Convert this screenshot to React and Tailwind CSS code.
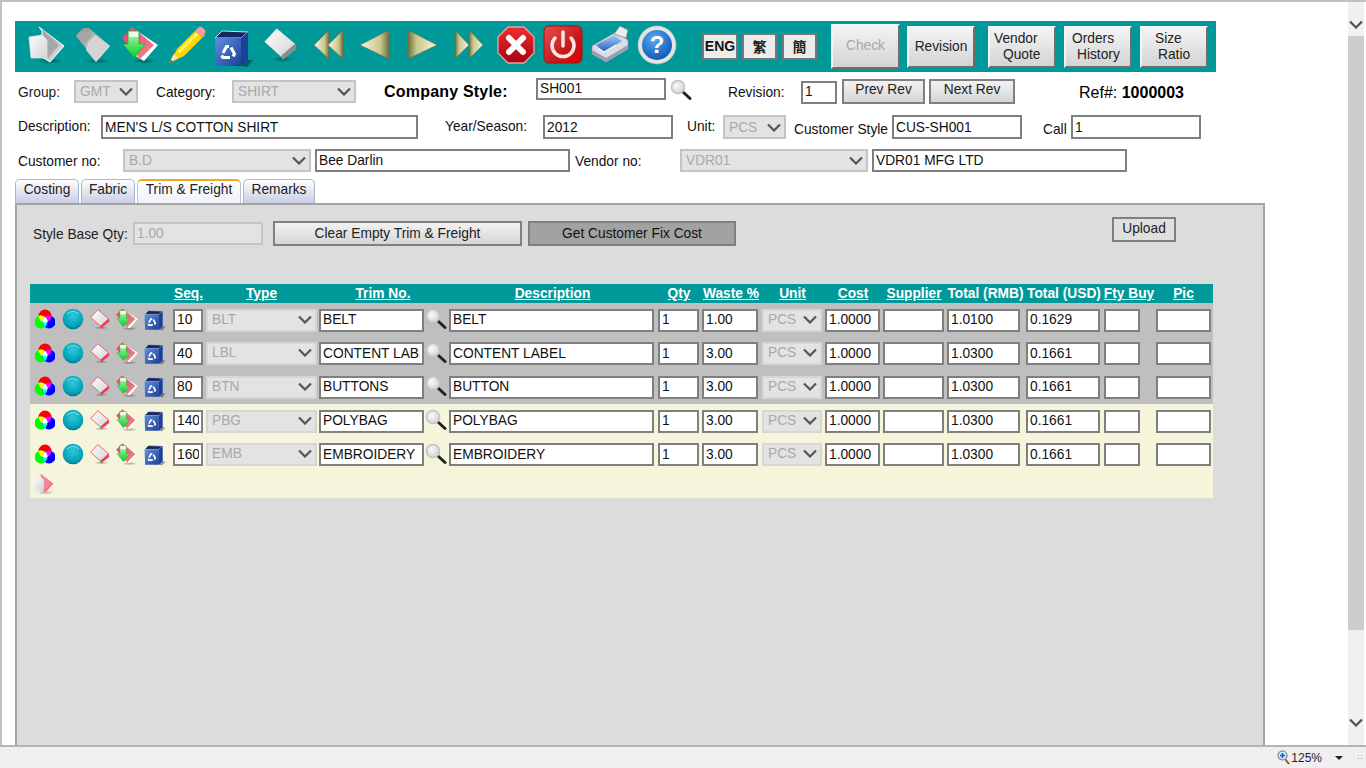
import React from "react";

const Defs = () => (
  <svg className="absolute w-0 h-0" aria-hidden="true">
    <defs>
      <linearGradient id="sheet" x1="0" y1="0" x2="1" y2="1">
        <stop offset="0" stopColor="#ffffff" />
        <stop offset="1" stopColor="#d2d2d2" />
      </linearGradient>
      <linearGradient id="greyFold" x1="0" y1="0" x2="1" y2="1">
        <stop offset="0" stopColor="#8f8f8f" />
        <stop offset="0.55" stopColor="#c0c0c0" />
        <stop offset="1" stopColor="#f4f4f4" />
      </linearGradient>
      <linearGradient id="pinkFold" x1="0" y1="0" x2="1" y2="1">
        <stop offset="0" stopColor="#e8405c" />
        <stop offset="1" stopColor="#f08a9a" />
      </linearGradient>
      <linearGradient id="green" x1="0" y1="0" x2="0" y2="1">
        <stop offset="0" stopColor="#b8f8b8" />
        <stop offset="1" stopColor="#00d020" />
      </linearGradient>
      <linearGradient id="olive" x1="0" y1="0" x2="1" y2="0">
        <stop offset="0" stopColor="#f5f5dc" />
        <stop offset="0.7" stopColor="#c8c890" />
        <stop offset="1" stopColor="#6f6f3c" />
      </linearGradient>
      <linearGradient id="oliveR" x1="0" y1="0" x2="1" y2="0">
        <stop offset="0" stopColor="#6f6f3c" />
        <stop offset="0.3" stopColor="#c8c890" />
        <stop offset="1" stopColor="#f5f5dc" />
      </linearGradient>
      <linearGradient id="blueBin" x1="0" y1="0" x2="1" y2="1">
        <stop offset="0" stopColor="#5f8fe0" />
        <stop offset="1" stopColor="#1c3f98" />
      </linearGradient>
      <linearGradient id="redStop" x1="0" y1="0" x2="0" y2="1">
        <stop offset="0" stopColor="#f03030" />
        <stop offset="1" stopColor="#a80010" />
      </linearGradient>
      <linearGradient id="redPower" x1="0" y1="0" x2="1" y2="1">
        <stop offset="0" stopColor="#e85050" />
        <stop offset="0.6" stopColor="#c81818" />
        <stop offset="1" stopColor="#e00000" />
      </linearGradient>
      <linearGradient id="btnFace" x1="0" y1="0" x2="0" y2="1">
        <stop offset="0" stopColor="#a8ccf4" />
        <stop offset="1" stopColor="#2060c0" />
      </linearGradient>
      <radialGradient id="helpBlue" cx="0.4" cy="0.3" r="0.8">
        <stop offset="0" stopColor="#58a8f0" />
        <stop offset="1" stopColor="#0a4fb0" />
      </radialGradient>
      <radialGradient id="teal" cx="0.5" cy="0.35" r="0.65">
        <stop offset="0" stopColor="#30c8d8" />
        <stop offset="0.8" stopColor="#00a0b8" />
        <stop offset="1" stopColor="#00707f" />
      </radialGradient>
      <radialGradient id="shade">
        <stop offset="0" stopColor="#000" stopOpacity="0.35" />
        <stop offset="1" stopColor="#000" stopOpacity="0" />
      </radialGradient>
      <radialGradient id="lens" cx="0.4" cy="0.4" r="0.7">
        <stop offset="0" stopColor="#fafafa" />
        <stop offset="1" stopColor="#cfcfcf" />
      </radialGradient>
      <clipPath id="cR"><circle cx="10" cy="7" r="6.5" /></clipPath>
      <clipPath id="cG"><circle cx="6" cy="13" r="6.5" /></clipPath>
      <clipPath id="cB"><circle cx="14" cy="13" r="6.5" /></clipPath>
    </defs>
  </svg>
);

const Box = ({ size = 40, children }) => (
  <svg width={size} height={size} viewBox="0 0 40 40">{children}</svg>
);

const NewDoc = ({ size, pink }) => (
  <Box size={size}>
    <ellipse cx="24" cy="36" rx="14" ry="3" fill="url(#shade)" />
    <path d="M13 2 L38 21 L24 37 L16 32 L16 6 Z" fill={pink ? "url(#pinkFold)" : "url(#greyFold)"} stroke="#fff" strokeWidth="1" />
    <path d="M17 5 L33 20 L22 33 L17 29 Z" fill={pink ? "#f08a9a" : "#a8a8a8"} />
    <path d="M3 12 L16 10 L21 15 L21 33 L5 33 Z" fill="url(#sheet)" stroke="#eee" strokeWidth="0.6" />
  </Box>
);

const Folder = () => (
  <Box>
    <ellipse cx="24" cy="36" rx="14" ry="3" fill="url(#shade)" />
    <path d="M3 10 L10 3 L16 3 L37 21 L23 37 Z" fill="url(#greyFold)" />
    <path d="M12 5 L18 10 L10 20 L3 11 Z" fill="#a6a6a6" />
    <path d="M15 17 L22 10 L37 21 L23 37 L13 25 Z" fill="#d4d4d4" />
  </Box>
);

const SaveIcon = ({ size }) => (
  <Box size={size}>
    <ellipse cx="24" cy="36" rx="13" ry="3" fill="url(#shade)" />
    <path d="M11 2 L38 20 L24 36 L14 30 Z" fill="#fff" />
    <path d="M2 13 L12 2 L34 20 L20 34 Z" fill="url(#pinkFold)" />
    <path d="M8 6 H19 V19 H25 L14 33 L3 19 H8 Z" fill="url(#green)" stroke="#0a9a18" strokeWidth="0.5" />
    <rect x="9" y="7" width="9" height="5" fill="#ecffec" />
  </Box>
);

const Pencil = () => (
  <Box>
    <path d="M2 38 L10 24 L31 3 L38 10 L17 31 Z" fill="#ffd800" stroke="#c89a00" strokeWidth="0.6" />
    <path d="M12 27 L33 6" stroke="#fff27a" strokeWidth="2.5" />
    <path d="M2 38 L7 29 L11 33 Z" fill="#f6e6b8" />
    <path d="M2 38 L4 34.5 L5.5 36.5 Z" fill="#555" />
    <path d="M28 6 L32 2 Q34 1 36 3 L38 5 Q39 7 38 8 L35 12 Z" fill="#f0a0a0" stroke="#c87878" strokeWidth="0.5" />
  </Box>
);

const Recycle = () => (
  <g transform="translate(14 22)" fill="none" stroke="#fff" strokeWidth="3">
    <path d="M-5 1 L-1.5 -5.5 L1 -5.5" />
    <path d="M3 -4.5 L6.5 2 L5 4.5" />
    <path d="M2 5.5 L-5 5.5 L-6.5 3.5" />
  </g>
);

const Bin = ({ size }) => (
  <Box size={size}>
    <path d="M27 36 L34 30 L39 30 L33 37 Z" fill="#000" opacity="0.4" />
    <path d="M1 8 L8 1 L34 2 L27 8 Z" fill="#16265e" stroke="#e4ecff" strokeWidth="0.9" />
    <path d="M27 8 L34 2 L34 30 L27 36 Z" fill="#1c3f98" />
    <path d="M1 8 H27 V36 H2 Z" fill="url(#blueBin)" />
    <Recycle />
  </Box>
);

const Eraser = ({ size, pink }) => (
  <Box size={size}>
    <ellipse cx="22" cy="36" rx="13" ry="3" fill="url(#shade)" />
    <path d="M3 17 L16 3 L36 20 L22 34 Z" fill="url(#sheet)" stroke={pink ? "#f0506a" : "#f4f4f4"} strokeWidth={pink ? 1.6 : 0.6} />
    <path d="M36 19 L37 25 L22 37 L21 32 Z" fill={pink ? "#ee3c5a" : "#8c8c8c"} />
  </Box>
);

const Tri = ({ dir, dbl }) => {
  const fill = dir === "l" ? "url(#olive)" : "url(#oliveR)";
  const stroke = "#6a6a44";
  if (dir === "l") {
    return (
      <Box>
        {dbl ? (
          <>
            <path d="M6 20 L21 5 V34 Z" fill={fill} stroke={stroke} strokeWidth="0.6" />
            <path d="M20 20 L35 5 V34 Z" fill={fill} stroke={stroke} strokeWidth="0.6" />
          </>
        ) : (
          <path d="M5 20 L34 5 V34 Z" fill={fill} stroke={stroke} strokeWidth="0.6" />
        )}
      </Box>
    );
  }
  return (
    <Box>
      {dbl ? (
        <>
          <path d="M6 5 L20 20 L6 34 Z" fill={fill} stroke={stroke} strokeWidth="0.6" />
          <path d="M20 5 L34 20 L20 34 Z" fill={fill} stroke={stroke} strokeWidth="0.6" />
        </>
      ) : (
        <path d="M6 5 L35 20 L6 34 Z" fill={fill} stroke={stroke} strokeWidth="0.6" />
      )}
    </Box>
  );
};

const Stop = () => (
  <Box>
    <path d="M12 2 H28 L38 12 V28 L28 38 H12 L2 28 V12 Z" fill="url(#redStop)" stroke="#e8a0a0" strokeWidth="1.4" />
    <path d="M13 13 L27 27 M27 13 L13 27" stroke="#fff" strokeWidth="6" strokeLinecap="round" />
  </Box>
);

const Power = () => (
  <Box>
    <rect x="1" y="1" width="38" height="37" rx="5" fill="url(#redPower)" stroke="#a01010" strokeWidth="1" />
    <path d="M12 13 A11 11 0 1 0 28 13" fill="none" stroke="#fde8e8" strokeWidth="3.5" strokeLinecap="round" />
    <path d="M20 7 V21" stroke="#fde8e8" strokeWidth="3.5" strokeLinecap="round" />
  </Box>
);

const Printer = () => (
  <Box>
    <path d="M2 21 L26 7 L38 15 L38 24 L16 37 L2 29 Z" fill="#d8dce6" stroke="#8a8e98" strokeWidth="0.6" />
    <path d="M6 20 L24 10 L32 16 L14 27 Z" fill="url(#btnFace)" />
    <path d="M24 9 L30 1 L38 5 L36 13 Z" fill="#ececec" stroke="#8a8a8a" strokeWidth="0.8" />
    <path d="M2 25 L16 33 L38 20 V24 L16 37 L2 29 Z" fill="#9aa0b0" />
    <path d="M8 24 L14 27 L26 20" fill="none" stroke="#f4f4f4" strokeWidth="1.4" />
  </Box>
);

const Help = () => (
  <Box>
    <circle cx="20" cy="20" r="19" fill="#e4e4e4" stroke="#c0c0c0" strokeWidth="0.6" />
    <circle cx="20" cy="20" r="15" fill="url(#helpBlue)" />
    <text x="20" y="28" textAnchor="middle" fontSize="24" fontWeight="700" fill="#fff" fontFamily="Liberation Sans, sans-serif">?</text>
  </Box>
);

const Rgb = () => (
  <svg width="20" height="20" viewBox="0 0 20 20">
    <circle cx="10" cy="7" r="6.5" fill="#ff0000" />
    <circle cx="6" cy="13" r="6.5" fill="#00ff00" />
    <circle cx="14" cy="13" r="6.5" fill="#0000ff" />
    <g clipPath="url(#cR)">
      <circle cx="6" cy="13" r="6.5" fill="#ffff00" />
      <circle cx="14" cy="13" r="6.5" fill="#ff00ff" />
    </g>
    <g clipPath="url(#cG)">
      <circle cx="14" cy="13" r="6.5" fill="#00ffff" />
      <g clipPath="url(#cR)"><circle cx="14" cy="13" r="6.5" fill="#ffffff" /></g>
    </g>
  </svg>
);

const Teal = () => (
  <svg width="22" height="22" viewBox="0 0 22 22">
    <circle cx="11" cy="11" r="10.3" fill="url(#teal)" />
    <path d="M5 6 Q11 1 17 6" fill="none" stroke="#8fe8f0" strokeWidth="1" opacity="0.8" />
  </svg>
);

const Mag = ({ size = 22 }) => (
  <svg width={size} height={size} viewBox="0 0 22 22">
    <path d="M13 13 L20 19.5" stroke="#222" strokeWidth="3" strokeLinecap="round" />
    <circle cx="8" cy="8" r="6.5" fill="url(#lens)" stroke="#c4c4c4" strokeWidth="1.6" />
  </svg>
);

const Chevron = ({ w = 14, h = 9, color = "#555" }) => (
  <svg width={w} height={h} viewBox="0 0 14 9">
    <path d="M1 1.5 L7 7.5 L13 1.5" fill="none" stroke={color} strokeWidth="2.2" />
  </svg>
);

const Field = ({ value = "", className = "" }) => (
  <input
    readOnly
    value={value}
    className={`shrink-0 bg-white border-2 border-[#7f7f7f] px-[2px] text-[13.75px] text-[#111] outline-none font-['Liberation_Sans',sans-serif] ${className}`}
  />
);

const Pick = ({ value, className = "" }) => (
  <div className={`shrink-0 flex items-center justify-between bg-[#e3e3e3] border-2 border-[#c4c4c4] pl-[4px] pr-[3px] text-[13.75px] text-[#a9a9a9] ${className}`}>
    <span className="mt-[2px]">{value}</span>
    <Chevron />
  </div>
);

const Label = ({ children, className = "" }) => (
  <span className={`shrink-0 text-[13.75px] text-[#111] whitespace-nowrap ${className}`}>{children}</span>
);

const FormBtn = ({ children, className = "" }) => (
  <div className={`shrink-0 flex items-center justify-center border-2 border-[#808080] bg-gradient-to-b from-[#f2f2f2] to-[#d6d6d6] text-[13.75px] text-[#222] ${className}`}>
    {children}
  </div>
);

const ToolBtn = ({ className = "", children }) => (
  <div className={`shrink-0 h-[42px] w-[68px] border-2 border-t-[#f4f4f4] border-l-[#f4f4f4] border-r-[#6e6e6e] border-b-[#6e6e6e] bg-gradient-to-b from-[#f4f4f4] to-[#d4d4d4] text-[13.75px] leading-[16px] text-[#222] flex flex-col justify-center ${className}`}>
    {children}
  </div>
);

const toolIcons = [
  <NewDoc key="a" />, <Folder key="b" />, <SaveIcon key="c" />, <Pencil key="d" />,
  <span key="e" className="flex mt-[10px]"><Bin /></span>,
  <span key="f" className="flex -mt-[2px]"><Eraser size={37} /></span>,
  <Tri key="g" dir="l" dbl />, <Tri key="h" dir="l" />, <Tri key="i" dir="r" />, <Tri key="j" dir="r" dbl />,
  <Stop key="k" />, <Power key="l" />, <Printer key="m" />, <Help key="n" />,
];

const colTpl = "grid grid-cols-[143px_33px_113px_130px_209px_44px_60px_63px_58px_64px_79px_78px_52px_57px]";

const headers = [
  ["Seq.", 1], ["Type", 1], ["Trim No.", 1], ["Description", 1], ["Qty", 1], ["Waste %", 1], ["Unit", 1],
  ["Cost", 1], ["Supplier", 1], ["Total (RMB)", 0], ["Total (USD)", 0], ["Fty Buy", 1], ["Pic", 1],
];

const rows = [
  { seq: "10", type: "BLT", trim: "BELT", desc: "BELT", waste: "1.00", rmb: "1.0100", usd: "0.1629", h: "h-[34px]", bg: "bg-[#bfbfbf]", cell: "h-[23px] pb-[2px]" },
  { seq: "40", type: "LBL", trim: "CONTENT LABEL", desc: "CONTENT LABEL", waste: "3.00", rmb: "1.0300", usd: "0.1661", h: "h-[33px]", bg: "bg-[#bfbfbf]", cell: "h-[23px] pb-[1px]" },
  { seq: "80", type: "BTN", trim: "BUTTONS", desc: "BUTTON", waste: "3.00", rmb: "1.0300", usd: "0.1661", h: "h-[34px]", bg: "bg-[#bfbfbf]", cell: "h-[23px] pb-[1px]" },
  { seq: "140", type: "PBG", trim: "POLYBAG", desc: "POLYBAG", waste: "3.00", rmb: "1.0300", usd: "0.1661", h: "h-[34px]", bg: "bg-[#f5f5dc]", cell: "h-[23px] pb-[2px]" },
  { seq: "160", type: "EMB", trim: "EMBROIDERY", desc: "EMBROIDERY", waste: "3.00", rmb: "1.0300", usd: "0.1661", h: "h-[33px]", bg: "bg-[#f5f5dc]", cell: "h-[23px] pb-[1px]" },
];

const Row = ({ r }) => (
  <div className={`${colTpl} items-center ${r.h} ${r.bg}`}>
    <div className="flex items-center pl-[5px] h-[26px] -mt-[2px]">
      <span className="w-[20px] flex"><Rgb /></span>
      <span className="w-[22px] ml-[7px] flex"><Teal /></span>
      <span className="w-[22px] ml-[5px] flex"><Eraser size={22} pink /></span>
      <span className="w-[24px] ml-[4px] flex"><SaveIcon size={24} /></span>
      <span className="w-[22px] ml-[5px] flex mt-[4px]"><Bin size={22} /></span>
    </div>
    <Field value={r.seq} className={`${r.cell} w-[30px]`} />
    <Pick value={r.type} className="h-[23px] pb-[2px] w-[111px] border-[#d6d6d6]" />
    <div className="flex items-center">
      <Field value={r.trim} className={`${r.cell} w-[105px]`} />
      <span className="ml-[1px] flex -mt-[2px]"><Mag /></span>
    </div>
    <Field value={r.desc} className={`${r.cell} w-[205px]`} />
    <Field value="1" className={`${r.cell} w-[41px]`} />
    <Field value={r.waste} className={`${r.cell} w-[56px]`} />
    <Pick value="PCS" className="h-[23px] pb-[2px] w-[60px] border-[#d6d6d6]" />
    <Field value="1.0000" className={`${r.cell} w-[55px]`} />
    <Field className={`${r.cell} w-[61px]`} />
    <Field value={r.rmb} className={`${r.cell} w-[73px]`} />
    <Field value={r.usd} className={`${r.cell} w-[74px]`} />
    <Field className={`${r.cell} w-[36px]`} />
    <Field className={`${r.cell} w-[55px]`} />
  </div>
);

const tabs = [
  ["Costing", "w-[64px]", false],
  ["Fabric", "w-[54px]", false],
  ["Trim & Freight", "w-[104px]", true],
  ["Remarks", "w-[72px]", false],
];

export default function App() {
  return (
    <div className="w-[1366px] h-[768px] overflow-hidden flex flex-col bg-white font-['Liberation_Sans',Arial,sans-serif]">
      <Defs />
      <div className="flex-1 min-h-0 flex border-t-2 border-l-2 border-[#c0c0c0]">
        <div className="flex-1 min-w-0 flex flex-col pl-[13px] pt-[19px]">
          {/* top toolbar */}
          <div className="w-[1201px] h-[51px] shrink-0 bg-[#009999] flex items-center pl-[7px]">
            {toolIcons.map((ic, i) => (
              <span key={i} className="w-[47px] shrink-0 flex justify-center -mt-[3px]">{ic}</span>
            ))}
            <div className="ml-[22px] w-[36px] h-[27px] -mt-[1px] shrink-0 flex items-center justify-center border-2 border-[#777] bg-[#ececec] text-[14px] font-bold text-[#111]">ENG</div>
            <div className="ml-[4px] w-[35px] h-[27px] -mt-[1px] shrink-0 flex items-center justify-center border-2 border-[#777] bg-[#ececec] text-[14px] font-bold text-[#222] font-['Noto_Sans_CJK_TC',sans-serif]">繁</div>
            <div className="ml-[5px] w-[35px] h-[27px] -mt-[1px] shrink-0 flex items-center justify-center border-2 border-[#777] bg-[#ececec] text-[14px] font-bold text-[#222] font-['Noto_Sans_CJK_TC',sans-serif]">簡</div>
            <ToolBtn className="ml-[14px] w-[69px] !h-[45px] items-center text-[#a8a8a8] border-[#dcdcdc] pb-[2px]">Check</ToolBtn>
            <ToolBtn className="ml-[7px] items-center mt-[1px]">Revision</ToolBtn>
            <ToolBtn className="ml-[13px] pl-[4px] mt-[1px]"><span>Vendor</span><span className="pl-[9px]">Quote</span></ToolBtn>
            <ToolBtn className="ml-[8px] pl-[6px] mt-[1px]"><span>Orders</span><span className="pl-[5px]">History</span></ToolBtn>
            <ToolBtn className="ml-[8px] pl-[13px] mt-[1px]"><span>Size</span><span className="pl-[3px]">Ratio</span></ToolBtn>
          </div>

          {/* style header */}
          <div className="mt-[6px] h-[26px] shrink-0 flex items-center pl-[3px]">
            <Label className="w-[56px] text-[#222] mt-[4px]">Group:</Label>
            <Pick value="GMT" className="w-[64px] h-[23px] mt-[1px]" />
            <Label className="ml-[18px] w-[76px] mt-[4px]">Category:</Label>
            <Pick value="SHIRT" className="w-[124px] h-[23px] mt-[1px]" />
            <span className="ml-[28px] w-[152px] shrink-0 text-[16px] font-bold text-black tracking-[0.2px] mt-[2px]">Company Style:</span>
            <Field value="SH001" className="w-[130px] h-[22px] pb-[2px] self-start" />
            <span className="ml-[4px] w-[22px] shrink-0 flex -mt-[3px]"><Mag /></span>
            <Label className="ml-[36px] w-[73px] mt-[4px]">Revision:</Label>
            <Field value="1" className="w-[36px] h-[23px] mt-[2px] pb-[1px]" />
            <FormBtn className="ml-[5px] w-[83px] h-[25px] pb-[2px]">Prev Rev</FormBtn>
            <FormBtn className="ml-[4px] w-[86px] h-[25px] pb-[2px]">Next Rev</FormBtn>
            <span className="ml-[64px] shrink-0 text-[16px] text-black mt-[4px]">Ref#: <b>1000003</b></span>
          </div>

          <div className="mt-[11px] h-[24px] shrink-0 flex items-center pl-[3px]">
            <Label className="w-[83px]">Description:</Label>
            <Field value="MEN'S L/S COTTON SHIRT" className="w-[317px] h-[24px]" />
            <Label className="ml-[27px] w-[98px]">Year/Season:</Label>
            <Field value="2012" className="w-[130px] h-[24px]" />
            <Label className="ml-[14px] w-[36px]">Unit:</Label>
            <Pick value="PCS" className="w-[63px] h-[24px]" />
            <Label className="ml-[8px] w-[98px] mt-[6px]">Customer Style</Label>
            <Field value="CUS-SH001" className="w-[130px] h-[24px]" />
            <Label className="ml-[21px] w-[28px] mt-[6px]">Call</Label>
            <Field value="1" className="w-[130px] h-[24px]" />
          </div>

          <div className="mt-[10px] h-[23px] shrink-0 flex items-center pl-[3px]">
            <Label className="w-[105px] mt-[4px]">Customer no:</Label>
            <Pick value="B.D" className="w-[188px] h-[23px]" />
            <Field value="Bee Darlin" className="ml-[4px] w-[255px] h-[23px] pb-[1px]" />
            <Label className="ml-[5px] w-[105px] mt-[4px]">Vendor no:</Label>
            <Pick value="VDR01" className="w-[188px] h-[23px]" />
            <Field value="VDR01 MFG LTD" className="ml-[4px] w-[255px] h-[23px] pb-[1px]" />
          </div>

          {/* tabs */}
          <div className="mt-[7px] h-[24px] shrink-0 flex gap-[2px]">
            {tabs.map(([t, w, active]) => (
              <div
                key={t}
                className={`${w} flex items-start justify-center rounded-t-[5px] border border-b-0 text-[13.75px] text-[#222] bg-gradient-to-b ${active ? "leading-[18px] border-[#b8c4d4] border-t-2 border-t-[#f5a623] from-white to-[#f0f2f8]" : "leading-[20px] border-[#a9b8cc] from-white to-[#c9cde4]"}`}
              >
                {t}
              </div>
            ))}
          </div>

          {/* panel */}
          <div className="flex-1 min-h-0 w-[1250px] bg-[#dcdcdc] border-2 border-b-0 border-[#a4a4a4] overflow-hidden">
            <div className="flex items-start pt-[12px]">
              <div className="flex items-center mt-[4px] pl-[16px]">
                <Label className="w-[100px] text-[#222] mt-[4px]">Style Base Qty:</Label>
                <Field value="1.00" className="w-[130px] h-[23px] !bg-[#e3e3e3] !border-[#c4c4c4] !text-[#a9a9a9]" />
                <FormBtn className="ml-[10px] w-[249px] h-[25px] pt-[2px]">Clear Empty Trim &amp; Freight</FormBtn>
                <div className="ml-[6px] w-[208px] h-[25px] pt-[2px] flex items-center justify-center border-2 border-[#808080] bg-[#a2a2a2] text-[13.75px] text-[#111]">Get Customer Fix Cost</div>
              </div>
              <FormBtn className="ml-[376px] w-[64px] h-[25px] !bg-none !bg-[#e0e0e0]">Upload</FormBtn>
            </div>

            <div className="ml-[13px] mt-[38px] w-[1183px]">
              <div className={`${colTpl} h-[19px] items-center bg-[#009999] pb-[2px]`}>
                <span />
                {headers.map(([h, link]) => (
                  <span key={h} className={`justify-self-center whitespace-nowrap text-[13.75px] font-bold text-white pr-[2px] ${link ? "underline" : ""}`}>{h}</span>
                ))}
              </div>
              {rows.map((r) => <Row key={r.seq} r={r} />)}
              <div className="h-[27px] bg-[#f5f5dc] flex items-start pl-[1px]">
                <NewDoc size={24} pink />
              </div>
            </div>
          </div>
        </div>

        {/* scrollbar */}
        <div className="w-[16px] shrink-0 flex flex-col bg-[#f0f0f0] mr-[2px]">
          <div className="h-[34px] flex items-end justify-center pb-[7px]"><Chevron color="#505050" /></div>
          <div className="h-[594px] bg-[#cdcdcd]" />
          <div className="flex-1 flex items-end justify-center pb-[18px]"><Chevron color="#505050" /></div>
        </div>
      </div>

      {/* status bar */}
      <div className="h-[23px] shrink-0 border-t-2 border-[#b4b4b4] bg-[#f0eeee] flex items-center justify-end">
        <Mag2 />
        <span className="ml-[1px] text-[12px] text-[#1a1a3a]">125%</span>
        <span className="ml-[13px] w-0 h-0 border-x-[4px] border-x-transparent border-t-[4px] border-t-[#222]" />
        <span className="ml-[14px] mr-[2px] w-[7px] h-[7px] bg-[radial-gradient(#b0b0b0_1px,transparent_1px)] bg-[length:3px_3px]" />
      </div>
    </div>
  );
}

function Mag2() {
  return (
    <svg width="13" height="15" viewBox="0 0 13 15">
      <path d="M8 9 L12 14" stroke="#8a5a20" strokeWidth="2" />
      <circle cx="5.5" cy="5.5" r="4.5" fill="#d4e6f8" stroke="#6a86a8" strokeWidth="1.2" />
      <path d="M3 5.5 H8 M5.5 3 V8" stroke="#1060d0" strokeWidth="1.6" />
    </svg>
  );
}
